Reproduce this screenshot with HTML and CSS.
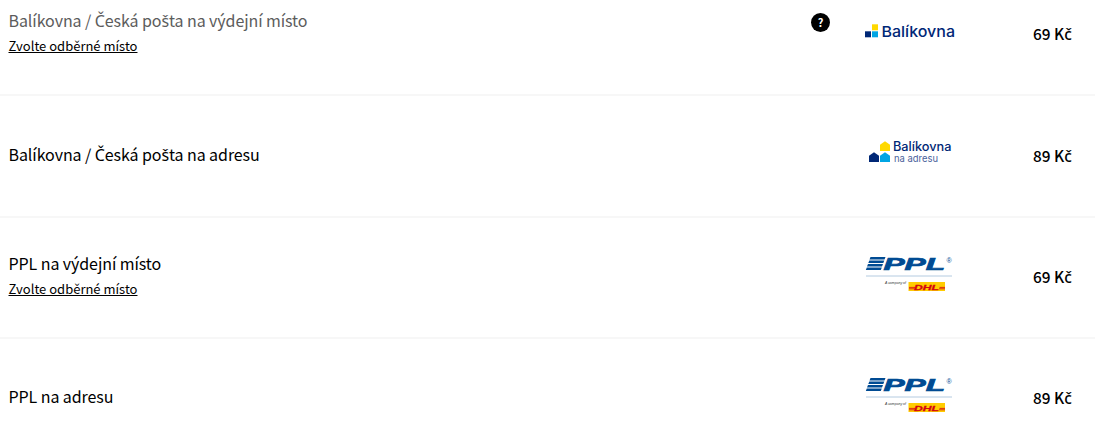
FILE: index.html
```html
<!DOCTYPE html>
<html lang="cs">
<head>
  <meta charset="UTF-8" />
  <meta name="viewport" content="width=device-width, initial-scale=1.0" />
  <title>Doprava</title>
  <link rel="stylesheet" href="styles.css">
</head>
<body>
  <!-- shared logo, used by both PPL rows -->
  <svg class="defs" width="0" height="0">
    <symbol id="ppl" viewBox="0 0 90 40">
      <g fill="#004b93">
        <path d="M5.500 0h15l-1 2.500H4.500zM4.300 3.500h15l-1 2.500H3.300zM3 7h15l-1 2.500H2zM1.800 10.400h15l-1 2.600H.8z" />
        <text class="ppl-name" x="18.500" y="12.700" textLength="61.500" lengthAdjust="spacingAndGlyphs">PPL</text>
        <text class="ppl-reg" x="81.500" y="5.500">®</text>
      </g>
      <path d="M1 19h86" stroke="#b4cbe0" stroke-width="1" />
      <text class="ppl-note" x="20" y="27" textLength="21" lengthAdjust="spacingAndGlyphs">A company of</text>
      <path d="M43.500 25h36.500v9H43.500z" fill="#fc0" />
      <path d="M44 30.400h6M44 31.800h5.500M74.500 30.400h5.500M74 31.800h6" stroke="#d40511" stroke-width=".8" />
      <text class="ppl-dhl" x="49" y="32.500" textLength="25" lengthAdjust="spacingAndGlyphs">DHL</text>
    </symbol>
  </svg>

  <div class="shipping">
    <div class="row">
      <div class="info">
        <div class="name hover">Balíkovna / <span class="caron">Č</span>eská po<span class="caron">š</span>ta na výdejní místo</div>
        <a class="choose">Zvolte odběrné místo</a>
      </div>
      <span class="help">?</span>
      <div class="logo">
        <svg width="96" height="40" viewBox="0 0 96 40">
          <path d="M7 9.300h6v6H7z" fill="#ffd900" />
          <path d="M0 16.300h6v6H0z" fill="#002776" />
          <path d="M7 16.300h6v6H7z" fill="#00a5e3" />
          <text class="bal-name" x="16.500" y="22" textLength="73.500" lengthAdjust="spacingAndGlyphs">Balíkovna</text>
        </svg>
      </div>
      <div class="price">69 K<span class="caron">č</span></div>
    </div>

    <div class="row">
      <div class="info">
        <div class="name">Balíkovna / <span class="caron">Č</span>eská po<span class="caron">š</span>ta na adresu</div>
      </div>
      <div class="logo">
        <svg width="96" height="40" viewBox="0 0 96 40">
          <path d="M15 8.800l5-3.500 5 3.500v6.200H15z" fill="#ffd900" />
          <path d="M4 19.800l5-3.500 5 3.500v6.200H4z" fill="#002776" />
          <path d="M15 19.800l5-3.500 5 3.500v6.200H15z" fill="#00a5e3" />
          <text class="bal-name small" x="28" y="15" textLength="58.500" lengthAdjust="spacingAndGlyphs">Balíkovna</text>
          <text class="bal-sub" x="29" y="25.700" textLength="44" lengthAdjust="spacingAndGlyphs">na adresu</text>
        </svg>
      </div>
      <div class="price">89 K<span class="caron">č</span></div>
    </div>

    <div class="row">
      <div class="info">
        <div class="name">PPL na výdejní místo</div>
        <a class="choose">Zvolte odběrné místo</a>
      </div>
      <div class="logo"><svg width="90" height="40"><use href="#ppl" /></svg></div>
      <div class="price">69 K<span class="caron">č</span></div>
    </div>

    <div class="row">
      <div class="info">
        <div class="name">PPL na adresu</div>
      </div>
      <div class="logo"><svg width="90" height="40"><use href="#ppl" /></svg></div>
      <div class="price">89 K<span class="caron">č</span></div>
    </div>
  </div>
</body>
</html>
```
FILE: styles.css
```css
* {
  box-sizing: border-box;
  margin: 0;
  padding: 0;
}

body {
  background: #fff;
  color: #000;
  font-family: "Noto Sans CJK SC", "Noto Sans", sans-serif;
  overflow: hidden;
}

.defs {
  display: block;
}

/* the list is scrolled a little, first row is cut at the top */
.shipping {
  margin-top: -25px;
}

.row {
  display: flex;
  align-items: center;
  height: 121.4px;
  padding: 0 22px 0 8.5px;
  border-bottom: 2px solid #f7f7f7;
}

.row:last-child {
  height: 120.400px;
  border-color: transparent;
}

.info {
  flex: 1;
  padding-bottom: 3px;
}

.name {
  font-size: 16px;
  line-height: 25px;
  letter-spacing: -.08px;
}

.name.hover {
  color: #5c5c5c;
}

/* letters with a caron */
.caron {
  font-family: "Noto Sans", sans-serif;
  line-height: 1;
}

.choose {
  display: block;
  font-size: 13px;
  line-height: 25px;
  text-decoration: underline;
}

.help {
  width: 19px;
  height: 19px;
  margin: -25px 35px 0 0;
  border-radius: 50%;
  background: #000;
  color: #fff;
  font-size: 11px;
  font-weight: 700;
  line-height: 18px;
  text-align: center;
}

.logo {
  width: 168px;
  height: 40px;
}

.logo svg {
  display: block;
}

.price {
  width: 40px;
  padding-bottom: 3px;
  font-size: 15.4px;
  font-weight: 500;
  line-height: 24px;
  white-space: nowrap;
}

.bal-name {
  fill: #002776;
  font: 500 15px Inter, sans-serif;
}

.bal-name.small {
  font-size: 12.5px;
}

.bal-sub {
  fill: #4a629b;
  font: 400 9.5px Inter, sans-serif;
}

.ppl-name {
  stroke: #004b93;
  stroke-width: .7px;
  font: italic 700 17px "Liberation Sans", sans-serif;
}

.ppl-reg {
  font: 400 7px "Liberation Sans", sans-serif;
}

.ppl-note {
  fill: #333;
  font: italic 400 4px "Liberation Sans", sans-serif;
}

.ppl-dhl {
  fill: #d40511;
  stroke: #d40511;
  stroke-width: .3px;
  font: italic 700 8px "Liberation Sans", sans-serif;
}
```
